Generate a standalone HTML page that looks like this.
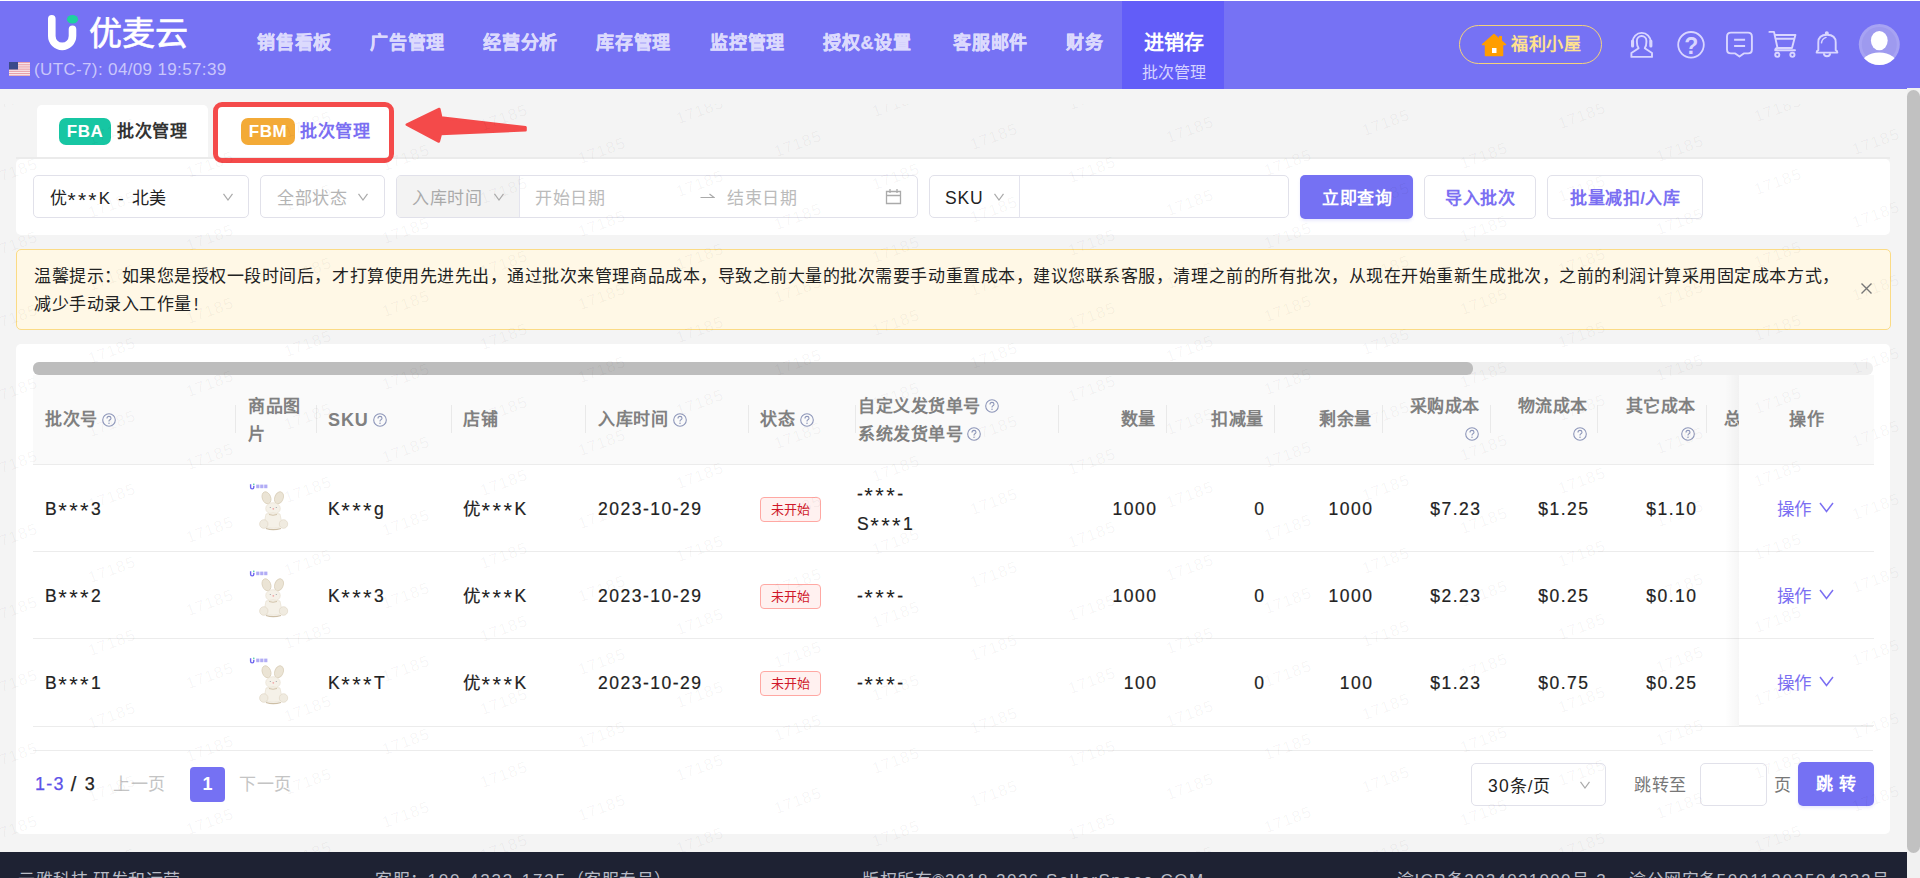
<!DOCTYPE html>
<html lang="zh-CN"><head><meta charset="utf-8">
<style>
*{box-sizing:border-box;margin:0;padding:0}
html,body{width:1920px;height:878px;overflow:hidden;background:#f4f4f4;font-family:"Liberation Sans",sans-serif;color:#222}
.a{position:absolute;white-space:nowrap}
#hdr{position:absolute;left:0;top:0;width:1920px;height:89px;background:#7672f4}
.nav{position:absolute;top:29.5px;font-size:18px;font-weight:bold;color:#dcdafd;line-height:26px;letter-spacing:0.75px;margin-left:1px;-webkit-text-stroke:0.35px #dcdafd}
.card{position:absolute;background:#fff;border-radius:5px}
.box{position:absolute;border:1px solid #e1e1ea;border-radius:5px;background:#fff}
.chev{position:absolute;width:10px;height:8px}
.th{position:absolute;font-size:17px;font-weight:bold;color:#808080;line-height:28px;letter-spacing:0.55px}
.td{position:absolute;font-size:17.5px;color:#222;line-height:28px;letter-spacing:1.5px;-webkit-text-stroke:0.2px #222}
.dv{position:absolute;top:405px;width:1px;height:28px;background:#e9e9e9}
.hl{position:absolute;height:1px;background:#ececec}
.q{position:absolute;width:14px;height:14px}
.tag{position:absolute;width:61px;height:25px;border:1px solid #ffa8a3;background:#fff1f0;border-radius:4px;color:#d0182a;font-size:13px;line-height:23px;text-align:center;letter-spacing:0.4px;text-indent:0.4px}
.op{position:absolute;font-size:17.5px;color:#7b6ff2;line-height:28px}
.as{font-size:22px;letter-spacing:2.4px;position:relative;top:3px;line-height:0;-webkit-text-stroke:0}
.wm{position:absolute;width:80px;height:24px;line-height:24px;text-align:center;font-size:16px;letter-spacing:1px;color:rgba(0,0,0,0.045);transform:rotate(-20deg)}
.img{position:absolute;width:40px;height:48px}
</style></head><body>
<div id="hdr">
<div class="a" style="left:0;top:0;width:1920px;height:1px;background:#fff"></div>
<svg class="a" style="left:40px;top:10px" width="45" height="45" viewBox="40 10 45 45">
<path d="M51.8,18.8 L51.8,36 A10.35,10.35 0 0 0 72.5,36 L72.5,29.3" fill="none" stroke="#fff" stroke-width="7.6" stroke-linecap="round"/>
<ellipse cx="72.5" cy="19.3" rx="5.6" ry="4.3" fill="#1ed1a0"/>
</svg>
<div class="a" id="logotxt" style="left:89px;top:12px;font-size:33px;line-height:44px;color:#fff;-webkit-text-stroke:0.7px #fff">优麦云</div>
<svg class="a" style="left:9px;top:62px" width="21" height="14" viewBox="0 0 21 14">
<rect width="21" height="14" fill="#e8a0aa"/>
<g fill="#f7e9ec"><rect y="1.1" width="21" height="1.1"/><rect y="3.3" width="21" height="1.1"/><rect y="5.5" width="21" height="1.1"/><rect y="7.7" width="21" height="1.1"/><rect y="9.9" width="21" height="1.1"/><rect y="12.1" width="21" height="1.1"/></g>
<rect width="9" height="7.5" fill="#3b4a8a"/>
</svg>
<div class="a" id="utc" style="left:34px;top:58px;font-size:17px;line-height:24px;color:#c9c6fb;letter-spacing:0.36px">(UTC-7): 04/09 19:57:39</div>
<div class="nav" style="left:256px">销售看板</div>
<div class="nav" style="left:369px">广告管理</div>
<div class="nav" style="left:482px">经营分析</div>
<div class="nav" style="left:595px">库存管理</div>
<div class="nav" style="left:709px">监控管理</div>
<div class="nav" style="left:822px">授权&amp;设置</div>
<div class="nav" style="left:952px">客服邮件</div>
<div class="nav" style="left:1065px">财务</div>
<div class="a" style="left:1122px;top:1px;width:102px;height:88px;background:#625df8"></div>
<div class="a" style="left:1144px;top:29px;font-size:20px;line-height:28px;font-weight:bold;color:#fff">进销存</div>
<div class="a" style="left:1142px;top:62px;font-size:16px;line-height:22px;color:#d5d2ff">批次管理</div>
<div class="a" style="left:1459px;top:25px;width:143px;height:39px;border:1px solid #f4d27b;border-radius:20px"></div>
<svg class="a" style="left:1480.5px;top:33px" width="26" height="24" viewBox="0 0 26 24">
<path d="M13,1.5 L1.5,11.5 L4.5,11.5 L4.5,22.5 L21.5,22.5 L21.5,11.5 L24.5,11.5 Z" fill="#ff9d00" stroke="#ff9d00" stroke-width="1.5" stroke-linejoin="round"/>
<rect x="18" y="3" width="3" height="6" fill="#ff9d00"/>
<rect x="11" y="15" width="4.5" height="5" fill="#fff"/>
</svg>
<div class="a" style="left:1511px;top:31px;font-size:17px;line-height:28px;font-weight:bold;color:#ffe28f;letter-spacing:0.6px">福利小屋</div>
<svg class="a" style="left:1625px;top:25px" width="280" height="45" viewBox="1625 25 280 45" fill="none" stroke="#d9d6ff" stroke-width="1.9" stroke-linejoin="round">
<path d="M1638.6,48.2 Q1636.9,46.3 1636.9,42 L1636.9,40.8 A4.75,4.75 0 0 1 1646.4,40.8 L1646.4,42 Q1646.4,46.3 1644.8,48.2 L1652,53 L1652,56.9 L1631.4,56.9 L1631.4,53 Z"/>
<path d="M1632.6,44.5 L1632.6,42 A9.1,9.1 0 0 1 1650.8,42 L1650.8,44.5"/>
<rect x="1631" y="39.6" width="3.1" height="8" rx="1.5" fill="#d9d6ff" stroke="none"/>
<rect x="1649.3" y="39.6" width="3.1" height="8" rx="1.5" fill="#d9d6ff" stroke="none"/>
<circle cx="1691" cy="44.8" r="12.8" stroke-width="1.8"/>
<text x="1691.2" y="53.5" font-family="Liberation Sans" font-size="23" font-weight="bold" text-anchor="middle" fill="#d9d6ff" stroke="none">?</text>
<path d="M1731,32.6 L1748,32.6 Q1751.9,32.6 1751.9,36.5 L1751.9,49.5 Q1751.9,53.4 1748,53.4 L1743.8,53.4 L1739.5,56.6 L1735.2,53.4 L1731,53.4 Q1727,53.4 1727,49.5 L1727,36.5 Q1727,32.6 1731,32.6 Z"/>
<path d="M1734.1,39.8 L1745.1,39.8 M1734.1,46 L1745.1,46"/>
<path d="M1769.4,31.9 L1774,31.9 L1777.5,48 L1792,48 L1795.4,35 L1774.7,35 M1775.4,38.8 L1794.5,38.8 M1777.5,48 Q1775.2,48.3 1775.2,50.3 L1795,50.3" stroke-linecap="round"/>
<circle cx="1777.3" cy="54.8" r="2.1"/><circle cx="1792.4" cy="54.8" r="2.1"/>
<path d="M1818.3,50.2 L1818.3,42.5 Q1818.3,34.8 1827,34.8 Q1835.7,34.8 1835.7,42.5 L1835.7,50.2 Q1837.4,51 1837.4,52.6 L1816.6,52.6 Q1816.6,51 1818.3,50.2 Z"/>
<circle cx="1826.8" cy="33.3" r="1.1" fill="#d9d6ff"/>
<path d="M1823.8,53.2 Q1824,56.2 1827,56.2 Q1830,56.2 1830.2,53.2"/>
<path d="M1821.5,42.8 Q1822,38.6 1826,37.4" stroke-width="1.5" stroke-linecap="round"/>
</svg>
<svg class="a" style="left:1858px;top:23px" width="43" height="43" viewBox="0 0 43 43">
<defs><clipPath id="cp"><circle cx="21.3" cy="21.5" r="20.5"/></clipPath></defs>
<circle cx="21.3" cy="21.5" r="20.5" fill="#a7a3f3"/>
<circle cx="21.3" cy="21.5" r="17.5" fill="#9e9aef"/>
<g clip-path="url(#cp)" fill="#fff"><ellipse cx="21.3" cy="17.6" rx="8.4" ry="9.6"/><ellipse cx="21.3" cy="43" rx="19" ry="13.5"/></g>
</svg>
</div>

<!-- tabs -->
<div class="card" style="left:37px;top:105px;width:171px;height:53px;border-radius:5px 5px 0 0"></div>
<div class="a" style="left:59px;top:118px;width:52px;height:27px;background:#17c6a3;border-radius:7px;color:#fff;font-weight:bold;font-size:17px;line-height:27px;text-align:center;letter-spacing:0.5px">FBA</div>
<div class="a" style="left:117px;top:118px;font-size:17px;line-height:28px;font-weight:bold;color:#333;letter-spacing:0.55px">批次管理</div>
<div class="card" style="left:213px;top:105px;width:180px;height:53px;border-radius:5px 5px 0 0"></div>
<div class="a" style="left:241px;top:118px;width:54px;height:27px;background:#f3aa37;border-radius:7px;color:#fff;font-weight:bold;font-size:17px;line-height:27px;text-align:center;letter-spacing:0.5px">FBM</div>
<div class="a" style="left:300px;top:118px;font-size:17px;line-height:28px;font-weight:bold;color:#7b6ff2;letter-spacing:0.55px">批次管理</div>
<!-- filter card -->
<div class="a" style="left:16px;top:157px;width:1874px;height:1.6px;background:#ebebeb"></div>
<div class="card" style="left:16px;top:158.6px;width:1874px;height:76.4px;border-radius:5px"></div>
<div class="box" style="left:33px;top:175px;width:216px;height:43px"></div>
<div class="a" style="left:50px;top:184.5px;font-size:17px;line-height:28px;color:#222;letter-spacing:0.55px">优<span class="as" style="font-size:21px;letter-spacing:2.2px;top:3px">***</span><span style="letter-spacing:1.6px">K - </span>北美</div>
<svg class="chev" style="left:223px;top:193px" viewBox="0 0 10 8"><path d="M0.5,0.8 L5,7 L9.5,0.8" fill="none" stroke="#aaa" stroke-width="1.2"/></svg>
<div class="box" style="left:260px;top:175px;width:125px;height:43px"></div>
<div class="a" style="left:277px;top:184.5px;font-size:17px;line-height:28px;color:#b5b5b5;letter-spacing:0.55px">全部状态</div>
<svg class="chev" style="left:358px;top:193px" viewBox="0 0 10 8"><path d="M0.5,0.8 L5,7 L9.5,0.8" fill="none" stroke="#aaa" stroke-width="1.2"/></svg>
<div class="box" style="left:396px;top:175px;width:522px;height:43px"></div>
<div class="a" style="left:397px;top:176px;width:123px;height:41px;background:#f3f3f3;border-right:1px solid #e4e4ee;border-radius:4px 0 0 4px"></div>
<div class="a" style="left:412px;top:184.5px;font-size:17px;line-height:28px;color:#aaa;letter-spacing:0.55px">入库时间</div>
<svg class="chev" style="left:494px;top:193px" viewBox="0 0 10 8"><path d="M0.5,0.8 L5,7 L9.5,0.8" fill="none" stroke="#aaa" stroke-width="1.2"/></svg>
<div class="a" style="left:535px;top:184.5px;font-size:17px;line-height:28px;color:#bbb;letter-spacing:0.55px">开始日期</div>
<svg class="a" style="left:700px;top:192px" width="15" height="8" viewBox="0 0 15 8"><path d="M0.5,5.5 L14,5.5 L9.5,2" fill="none" stroke="#aaa" stroke-width="1.2"/></svg>
<div class="a" style="left:727px;top:184.5px;font-size:17px;line-height:28px;color:#bbb;letter-spacing:0.55px">结束日期</div>
<svg class="a" style="left:885px;top:188px" width="17" height="17" viewBox="0 0 17 17"><path d="M1.5,3.5 L15.5,3.5 L15.5,15.5 L1.5,15.5 Z M1.5,7.5 L15.5,7.5 M5,1 L5,5 M12,1 L12,5" fill="none" stroke="#aaa" stroke-width="1.3"/></svg>
<div class="box" style="left:929px;top:175px;width:360px;height:43px"></div>
<div class="a" style="left:1019px;top:176px;width:1px;height:42px;background:#e4e4ee"></div>
<div class="a" style="left:945px;top:183.5px;font-size:17.5px;line-height:28px;color:#222;letter-spacing:0.8px">SKU</div>
<svg class="chev" style="left:994px;top:193px" viewBox="0 0 10 8"><path d="M0.5,0.8 L5,7 L9.5,0.8" fill="none" stroke="#aaa" stroke-width="1.2"/></svg>
<div class="a" style="left:1300px;top:175px;width:113px;height:44px;background:#7571f3;border-radius:5px;box-shadow:0 2px 3px rgba(117,113,243,0.15)"></div>
<div class="a" style="left:1322px;top:184.5px;font-size:17px;line-height:28px;color:#fff;font-weight:bold;letter-spacing:0.55px">立即查询</div>
<div class="box" style="left:1424px;top:175px;width:112px;height:44px"></div>
<div class="a" style="left:1445px;top:184.5px;font-size:17px;line-height:28px;color:#7b6ff2;font-weight:bold;letter-spacing:0.55px">导入批次</div>
<div class="box" style="left:1547px;top:175px;width:156px;height:44px"></div>
<div class="a" style="left:1570px;top:184.5px;font-size:17px;line-height:28px;color:#7b6ff2;font-weight:bold;letter-spacing:0.55px">批量减扣/入库</div>

<div class="a" style="left:213px;top:102px;width:181px;height:61px;border:5.6px solid #f44a4a;border-radius:9px"></div>
<svg class="a" style="left:400px;top:100px" width="135" height="50" viewBox="400 100 135 50">
<path d="M406.8,124.6 L439.3,109 L441.2,117.6 L525.5,127.3 L525.5,130.3 L440.8,134 L438.8,141.5 Z" fill="#f44a4a" stroke="#f44a4a" stroke-width="2.6" stroke-linejoin="round"/>
</svg>

<!-- notice -->
<div class="a" style="left:16px;top:249px;width:1875px;height:81px;background:#fff8e6;border:1px solid #fbdb85;border-radius:5px"></div>
<div class="a" style="left:34px;top:263px;font-size:17px;line-height:28px;color:#222;letter-spacing:0.53px">温馨提示：如果您是授权一段时间后，才打算使用先进先出，通过批次来管理商品成本，导致之前大量的批次需要手动重置成本，建议您联系客服，清理之前的所有批次，从现在开始重新生成批次，之前的利润计算采用固定成本方式，<br>减少手动录入工作量<span style="letter-spacing:0;margin-left:2px">!</span></div>
<svg class="a" style="left:1860px;top:282px" width="13" height="13" viewBox="0 0 13 13"><path d="M1.5,1.5 L11.5,11.5 M11.5,1.5 L1.5,11.5" fill="none" stroke="#777" stroke-width="1.4"/></svg>

<!-- table card -->
<div class="card" style="left:16px;top:344px;width:1874px;height:490px"></div>
<div class="a" style="left:33px;top:362px;width:1840px;height:12.5px;background:#efefef;border-radius:6px"></div>
<div class="a" style="left:33px;top:362px;width:1440px;height:12.5px;background:#bdbdbd;border-radius:6px"></div>
<div class="a" style="left:33px;top:374.5px;width:1840px;height:90px;background:#fafafa"></div>
<div class="hl" style="left:33px;top:464px;width:1840px"></div>
<div class="hl" style="left:33px;top:551px;width:1840px"></div>
<div class="hl" style="left:33px;top:638px;width:1840px"></div>
<div class="hl" style="left:33px;top:726px;width:1840px"></div>
<div class="hl" style="left:33px;top:750px;width:1840px"></div>
<div class="dv" style="left:235px"></div>
<div class="dv" style="left:316px"></div>
<div class="dv" style="left:451px"></div>
<div class="dv" style="left:585px"></div>
<div class="dv" style="left:748px"></div>
<div class="dv" style="left:855px"></div>
<div class="dv" style="left:1058px"></div>
<div class="dv" style="left:1166px"></div>
<div class="dv" style="left:1274px"></div>
<div class="dv" style="left:1382px"></div>
<div class="dv" style="left:1490px"></div>
<div class="dv" style="left:1597px"></div>
<div class="dv" style="left:1706px"></div>
<div class="th" style="left:45px;top:406px">批次号</div><svg class="q" style="left:102px;top:413px" viewBox="0 0 14 14"><circle cx="7" cy="7" r="6.3" fill="none" stroke="#8d96b9" stroke-width="1.1"/><path d="M5,5.4 Q5,3.4 7,3.4 Q9,3.4 9,5.2 Q9,6.3 7.6,6.9 Q7,7.2 7,8.4" fill="none" stroke="#8d96b9" stroke-width="1.1"/><circle cx="7" cy="10.3" r="0.75" fill="#8d96b9"/></svg>
<div class="th" style="left:248px;top:393px;line-height:28px">商品图<br>片</div>
<div class="th" style="left:328px;top:405.5px;letter-spacing:0.9px;font-size:18px">SKU</div><svg class="q" style="left:373px;top:413px" viewBox="0 0 14 14"><circle cx="7" cy="7" r="6.3" fill="none" stroke="#8d96b9" stroke-width="1.1"/><path d="M5,5.4 Q5,3.4 7,3.4 Q9,3.4 9,5.2 Q9,6.3 7.6,6.9 Q7,7.2 7,8.4" fill="none" stroke="#8d96b9" stroke-width="1.1"/><circle cx="7" cy="10.3" r="0.75" fill="#8d96b9"/></svg>
<div class="th" style="left:463px;top:406px">店铺</div>
<div class="th" style="left:598px;top:406px">入库时间</div><svg class="q" style="left:673px;top:413px" viewBox="0 0 14 14"><circle cx="7" cy="7" r="6.3" fill="none" stroke="#8d96b9" stroke-width="1.1"/><path d="M5,5.4 Q5,3.4 7,3.4 Q9,3.4 9,5.2 Q9,6.3 7.6,6.9 Q7,7.2 7,8.4" fill="none" stroke="#8d96b9" stroke-width="1.1"/><circle cx="7" cy="10.3" r="0.75" fill="#8d96b9"/></svg>
<div class="th" style="left:760px;top:406px">状态</div><svg class="q" style="left:800px;top:413px" viewBox="0 0 14 14"><circle cx="7" cy="7" r="6.3" fill="none" stroke="#8d96b9" stroke-width="1.1"/><path d="M5,5.4 Q5,3.4 7,3.4 Q9,3.4 9,5.2 Q9,6.3 7.6,6.9 Q7,7.2 7,8.4" fill="none" stroke="#8d96b9" stroke-width="1.1"/><circle cx="7" cy="10.3" r="0.75" fill="#8d96b9"/></svg>
<div class="th" style="left:858px;top:393px">自定义发货单号</div><svg class="q" style="left:985px;top:399px" viewBox="0 0 14 14"><circle cx="7" cy="7" r="6.3" fill="none" stroke="#8d96b9" stroke-width="1.1"/><path d="M5,5.4 Q5,3.4 7,3.4 Q9,3.4 9,5.2 Q9,6.3 7.6,6.9 Q7,7.2 7,8.4" fill="none" stroke="#8d96b9" stroke-width="1.1"/><circle cx="7" cy="10.3" r="0.75" fill="#8d96b9"/></svg>
<div class="th" style="left:858px;top:421px">系统发货单号</div><svg class="q" style="left:967px;top:427px" viewBox="0 0 14 14"><circle cx="7" cy="7" r="6.3" fill="none" stroke="#8d96b9" stroke-width="1.1"/><path d="M5,5.4 Q5,3.4 7,3.4 Q9,3.4 9,5.2 Q9,6.3 7.6,6.9 Q7,7.2 7,8.4" fill="none" stroke="#8d96b9" stroke-width="1.1"/><circle cx="7" cy="10.3" r="0.75" fill="#8d96b9"/></svg>
<div class="th" style="left:1058px;top:406px;width:98px;text-align:right">数量</div>
<div class="th" style="left:1166px;top:406px;width:98px;text-align:right">扣减量</div>
<div class="th" style="left:1274px;top:406px;width:98px;text-align:right">剩余量</div>
<div class="th" style="left:1382px;top:393px;width:98px;text-align:right">采购成本</div><svg class="q" style="left:1465px;top:427px" viewBox="0 0 14 14"><circle cx="7" cy="7" r="6.3" fill="none" stroke="#8d96b9" stroke-width="1.1"/><path d="M5,5.4 Q5,3.4 7,3.4 Q9,3.4 9,5.2 Q9,6.3 7.6,6.9 Q7,7.2 7,8.4" fill="none" stroke="#8d96b9" stroke-width="1.1"/><circle cx="7" cy="10.3" r="0.75" fill="#8d96b9"/></svg>
<div class="th" style="left:1490px;top:393px;width:98px;text-align:right">物流成本</div><svg class="q" style="left:1573px;top:427px" viewBox="0 0 14 14"><circle cx="7" cy="7" r="6.3" fill="none" stroke="#8d96b9" stroke-width="1.1"/><path d="M5,5.4 Q5,3.4 7,3.4 Q9,3.4 9,5.2 Q9,6.3 7.6,6.9 Q7,7.2 7,8.4" fill="none" stroke="#8d96b9" stroke-width="1.1"/><circle cx="7" cy="10.3" r="0.75" fill="#8d96b9"/></svg>
<div class="th" style="left:1597px;top:393px;width:99px;text-align:right">其它成本</div><svg class="q" style="left:1681px;top:427px" viewBox="0 0 14 14"><circle cx="7" cy="7" r="6.3" fill="none" stroke="#8d96b9" stroke-width="1.1"/><path d="M5,5.4 Q5,3.4 7,3.4 Q9,3.4 9,5.2 Q9,6.3 7.6,6.9 Q7,7.2 7,8.4" fill="none" stroke="#8d96b9" stroke-width="1.1"/><circle cx="7" cy="10.3" r="0.75" fill="#8d96b9"/></svg>
<div class="th" style="left:1724px;top:406px">总</div>
<div class="td" style="left:45px;top:495px">B<span class="as">***</span>3</div>
<svg class="a" style="left:244px;top:478px" width="50" height="56" viewBox="0 0 50 56">
<path d="M6.6,6.2 L6.6,9.3 Q6.6,10.9 8.2,10.9 Q9.8,10.9 9.8,9.3 L9.8,7.8" fill="none" stroke="#6e66ee" stroke-width="1.4"/>
<circle cx="9.8" cy="6.2" r="0.8" fill="#3cc9a0"/>
<g fill="#b1acf5"><rect x="12.2" y="6.6" width="3.2" height="3.6"/><rect x="16.2" y="6.6" width="3.2" height="3.6"/><rect x="20.2" y="6.6" width="3.2" height="3.6"/></g>
<ellipse cx="22.5" cy="19.8" rx="4.2" ry="6.2" fill="#ebe4d5" stroke="#ddd3bf" stroke-width="0.9" transform="rotate(-20 22.5 19.8)"/>
<ellipse cx="35" cy="19.8" rx="4.2" ry="6.2" fill="#ebe4d5" stroke="#ddd3bf" stroke-width="0.9" transform="rotate(22 35 19.8)"/>
<ellipse cx="29" cy="30.5" rx="7.3" ry="5.8" fill="#f5f1e8" stroke="#e6ddcc" stroke-width="0.6"/>
<path d="M22,36 Q29,33.5 36,36 L38.5,48.5 Q29,52 19.5,48.5 Z" fill="#f5f1e8" stroke="#e6ddcc" stroke-width="0.6"/>
<ellipse cx="19.8" cy="46" rx="4.2" ry="4.3" fill="#f0ebe0" stroke="#ded4c1" stroke-width="0.6"/>
<ellipse cx="39.5" cy="46" rx="4.2" ry="4.3" fill="#f0ebe0" stroke="#ded4c1" stroke-width="0.6"/>
<path d="M22,50.5 Q29,52.8 37,50.5" fill="none" stroke="#cdbfa6" stroke-width="1.2"/>
<circle cx="29.3" cy="30.8" r="0.9" fill="#f0a8a8"/>
<circle cx="26.3" cy="29.5" r="0.6" fill="#9aa0a8"/><circle cx="32.3" cy="29.5" r="0.6" fill="#9aa0a8"/>
<path d="M25,36.5 Q29,38 33,36.5" fill="none" stroke="#c9b79a" stroke-width="0.8"/>
</svg>
<div class="td" style="left:328px;top:495px">K<span class="as">***</span>g</div>
<div class="td" style="left:463px;top:495px">优<span class="as">***</span>K</div>
<div class="td" style="left:598px;top:495px">2023-10-29</div>
<div class="tag" style="left:760px;top:497px">未开始</div>
<div class="td" style="left:857px;top:479px;line-height:30px">-<span class="as">***</span>-<br>S<span class="as">***</span>1</div>
<div class="td" style="left:1058px;top:495px;width:99.5px;text-align:right">1000</div>
<div class="td" style="left:1166px;top:495px;width:99.5px;text-align:right">0</div>
<div class="td" style="left:1274px;top:495px;width:99.5px;text-align:right">1000</div>
<div class="td" style="left:1382px;top:495px;width:99.5px;text-align:right">$7.23</div>
<div class="td" style="left:1490px;top:495px;width:99.5px;text-align:right">$1.25</div>
<div class="td" style="left:1597px;top:495px;width:100.5px;text-align:right">$1.10</div>
<div class="td" style="left:45px;top:582px">B<span class="as">***</span>2</div>
<svg class="a" style="left:244px;top:565px" width="50" height="56" viewBox="0 0 50 56">
<path d="M6.6,6.2 L6.6,9.3 Q6.6,10.9 8.2,10.9 Q9.8,10.9 9.8,9.3 L9.8,7.8" fill="none" stroke="#6e66ee" stroke-width="1.4"/>
<circle cx="9.8" cy="6.2" r="0.8" fill="#3cc9a0"/>
<g fill="#b1acf5"><rect x="12.2" y="6.6" width="3.2" height="3.6"/><rect x="16.2" y="6.6" width="3.2" height="3.6"/><rect x="20.2" y="6.6" width="3.2" height="3.6"/></g>
<ellipse cx="22.5" cy="19.8" rx="4.2" ry="6.2" fill="#ebe4d5" stroke="#ddd3bf" stroke-width="0.9" transform="rotate(-20 22.5 19.8)"/>
<ellipse cx="35" cy="19.8" rx="4.2" ry="6.2" fill="#ebe4d5" stroke="#ddd3bf" stroke-width="0.9" transform="rotate(22 35 19.8)"/>
<ellipse cx="29" cy="30.5" rx="7.3" ry="5.8" fill="#f5f1e8" stroke="#e6ddcc" stroke-width="0.6"/>
<path d="M22,36 Q29,33.5 36,36 L38.5,48.5 Q29,52 19.5,48.5 Z" fill="#f5f1e8" stroke="#e6ddcc" stroke-width="0.6"/>
<ellipse cx="19.8" cy="46" rx="4.2" ry="4.3" fill="#f0ebe0" stroke="#ded4c1" stroke-width="0.6"/>
<ellipse cx="39.5" cy="46" rx="4.2" ry="4.3" fill="#f0ebe0" stroke="#ded4c1" stroke-width="0.6"/>
<path d="M22,50.5 Q29,52.8 37,50.5" fill="none" stroke="#cdbfa6" stroke-width="1.2"/>
<circle cx="29.3" cy="30.8" r="0.9" fill="#f0a8a8"/>
<circle cx="26.3" cy="29.5" r="0.6" fill="#9aa0a8"/><circle cx="32.3" cy="29.5" r="0.6" fill="#9aa0a8"/>
<path d="M25,36.5 Q29,38 33,36.5" fill="none" stroke="#c9b79a" stroke-width="0.8"/>
</svg>
<div class="td" style="left:328px;top:582px">K<span class="as">***</span>3</div>
<div class="td" style="left:463px;top:582px">优<span class="as">***</span>K</div>
<div class="td" style="left:598px;top:582px">2023-10-29</div>
<div class="tag" style="left:760px;top:584px">未开始</div>
<div class="td" style="left:857px;top:582px">-<span class="as">***</span>-</div>
<div class="td" style="left:1058px;top:582px;width:99.5px;text-align:right">1000</div>
<div class="td" style="left:1166px;top:582px;width:99.5px;text-align:right">0</div>
<div class="td" style="left:1274px;top:582px;width:99.5px;text-align:right">1000</div>
<div class="td" style="left:1382px;top:582px;width:99.5px;text-align:right">$2.23</div>
<div class="td" style="left:1490px;top:582px;width:99.5px;text-align:right">$0.25</div>
<div class="td" style="left:1597px;top:582px;width:100.5px;text-align:right">$0.10</div>
<div class="td" style="left:45px;top:669px">B<span class="as">***</span>1</div>
<svg class="a" style="left:244px;top:652px" width="50" height="56" viewBox="0 0 50 56">
<path d="M6.6,6.2 L6.6,9.3 Q6.6,10.9 8.2,10.9 Q9.8,10.9 9.8,9.3 L9.8,7.8" fill="none" stroke="#6e66ee" stroke-width="1.4"/>
<circle cx="9.8" cy="6.2" r="0.8" fill="#3cc9a0"/>
<g fill="#b1acf5"><rect x="12.2" y="6.6" width="3.2" height="3.6"/><rect x="16.2" y="6.6" width="3.2" height="3.6"/><rect x="20.2" y="6.6" width="3.2" height="3.6"/></g>
<ellipse cx="22.5" cy="19.8" rx="4.2" ry="6.2" fill="#ebe4d5" stroke="#ddd3bf" stroke-width="0.9" transform="rotate(-20 22.5 19.8)"/>
<ellipse cx="35" cy="19.8" rx="4.2" ry="6.2" fill="#ebe4d5" stroke="#ddd3bf" stroke-width="0.9" transform="rotate(22 35 19.8)"/>
<ellipse cx="29" cy="30.5" rx="7.3" ry="5.8" fill="#f5f1e8" stroke="#e6ddcc" stroke-width="0.6"/>
<path d="M22,36 Q29,33.5 36,36 L38.5,48.5 Q29,52 19.5,48.5 Z" fill="#f5f1e8" stroke="#e6ddcc" stroke-width="0.6"/>
<ellipse cx="19.8" cy="46" rx="4.2" ry="4.3" fill="#f0ebe0" stroke="#ded4c1" stroke-width="0.6"/>
<ellipse cx="39.5" cy="46" rx="4.2" ry="4.3" fill="#f0ebe0" stroke="#ded4c1" stroke-width="0.6"/>
<path d="M22,50.5 Q29,52.8 37,50.5" fill="none" stroke="#cdbfa6" stroke-width="1.2"/>
<circle cx="29.3" cy="30.8" r="0.9" fill="#f0a8a8"/>
<circle cx="26.3" cy="29.5" r="0.6" fill="#9aa0a8"/><circle cx="32.3" cy="29.5" r="0.6" fill="#9aa0a8"/>
<path d="M25,36.5 Q29,38 33,36.5" fill="none" stroke="#c9b79a" stroke-width="0.8"/>
</svg>
<div class="td" style="left:328px;top:669px">K<span class="as">***</span>T</div>
<div class="td" style="left:463px;top:669px">优<span class="as">***</span>K</div>
<div class="td" style="left:598px;top:669px">2023-10-29</div>
<div class="tag" style="left:760px;top:671px">未开始</div>
<div class="td" style="left:857px;top:669px">-<span class="as">***</span>-</div>
<div class="td" style="left:1058px;top:669px;width:99.5px;text-align:right">100</div>
<div class="td" style="left:1166px;top:669px;width:99.5px;text-align:right">0</div>
<div class="td" style="left:1274px;top:669px;width:99.5px;text-align:right">100</div>
<div class="td" style="left:1382px;top:669px;width:99.5px;text-align:right">$1.23</div>
<div class="td" style="left:1490px;top:669px;width:99.5px;text-align:right">$0.75</div>
<div class="td" style="left:1597px;top:669px;width:100.5px;text-align:right">$0.25</div>
<div class="a" style="left:1725px;top:374.5px;width:14px;height:351px;background:linear-gradient(to right,rgba(0,0,0,0),rgba(0,0,0,0.035))"></div>
<div class="a" style="left:1739px;top:374.5px;width:135px;height:90px;background:#fafafa;border-bottom:1px solid #ececec"></div>
<div class="a" style="left:1739px;top:465px;width:135px;height:87px;background:#fff;border-bottom:1px solid #ececec"></div>
<div class="a" style="left:1739px;top:552px;width:135px;height:87px;background:#fff;border-bottom:1px solid #ececec"></div>
<div class="a" style="left:1739px;top:639px;width:135px;height:87px;background:#fff;border-bottom:1px solid #ececec"></div>
<div class="th" style="left:1789px;top:406px">操作</div>
<div class="op" style="left:1777px;top:495px">操作</div><svg class="a" style="left:1819px;top:502px" width="16" height="11" viewBox="0 0 16 11"><path d="M1,1 L7.5,9.5 L14,1" fill="none" stroke="#7b6ff2" stroke-width="1.5"/></svg>
<div class="op" style="left:1777px;top:582px">操作</div><svg class="a" style="left:1819px;top:589px" width="16" height="11" viewBox="0 0 16 11"><path d="M1,1 L7.5,9.5 L14,1" fill="none" stroke="#7b6ff2" stroke-width="1.5"/></svg>
<div class="op" style="left:1777px;top:669px">操作</div><svg class="a" style="left:1819px;top:676px" width="16" height="11" viewBox="0 0 16 11"><path d="M1,1 L7.5,9.5 L14,1" fill="none" stroke="#7b6ff2" stroke-width="1.5"/></svg>

<div class="a" style="left:35px;top:770px;font-size:18px;line-height:28px;color:#222;letter-spacing:1.2px;-webkit-text-stroke:0.25px"><span style="color:#5d52e8">1-3</span> <span style="font-size:20px;position:relative;top:1px;line-height:0">/</span> <span style="margin-left:1px">3</span></div>
<div class="a" style="left:113px;top:771px;font-size:17px;line-height:28px;color:#c4c4c4;letter-spacing:0.55px">上一页</div>
<div class="a" style="left:190px;top:767px;width:35px;height:35px;background:#7571f3;border-radius:4px;color:#fff;font-weight:bold;font-size:18px;line-height:35px;text-align:center">1</div>
<div class="a" style="left:239px;top:771px;font-size:17px;line-height:28px;color:#c4c4c4;letter-spacing:0.55px">下一页</div>
<div class="box" style="left:1471px;top:763px;width:135px;height:43px"></div>
<div class="a" style="left:1488px;top:772px;font-size:17px;line-height:28px;color:#222;letter-spacing:0.55px"><span style="letter-spacing:1.3px;font-size:17.5px">30</span>条/页</div>
<svg class="chev" style="left:1580px;top:781px" viewBox="0 0 10 8"><path d="M0.5,0.8 L5,7 L9.5,0.8" fill="none" stroke="#aaa" stroke-width="1.2"/></svg>
<div class="a" style="left:1634px;top:772px;font-size:17px;line-height:28px;color:#777;letter-spacing:0.55px">跳转至</div>
<div class="box" style="left:1700px;top:763px;width:67px;height:43px"></div>
<div class="a" style="left:1774px;top:772px;font-size:17px;line-height:28px;color:#777">页</div>
<div class="a" style="left:1798px;top:762px;width:76px;height:44px;background:#7571f3;border-radius:5px;box-shadow:0 2px 3px rgba(117,113,243,0.15)"></div>
<div class="a" style="left:1816px;top:771px;font-size:17px;line-height:28px;color:#fff;font-weight:bold;letter-spacing:0.55px">跳 转</div>

<div class="a" style="left:0;top:104px;width:1907px;height:748px;overflow:hidden;pointer-events:none">
<div class="wm" style="left:-26px;top:-17px">17185</div><div class="wm" style="left:-26px;top:56px">17185</div><div class="wm" style="left:-26px;top:129px">17185</div><div class="wm" style="left:-26px;top:202px">17185</div><div class="wm" style="left:-26px;top:275px">17185</div><div class="wm" style="left:-26px;top:348px">17185</div><div class="wm" style="left:-26px;top:421px">17185</div><div class="wm" style="left:-26px;top:494px">17185</div><div class="wm" style="left:-26px;top:567px">17185</div><div class="wm" style="left:-26px;top:640px">17185</div><div class="wm" style="left:-26px;top:713px">17185</div><div class="wm" style="left:72px;top:16px">17185</div><div class="wm" style="left:72px;top:89px">17185</div><div class="wm" style="left:72px;top:162px">17185</div><div class="wm" style="left:72px;top:235px">17185</div><div class="wm" style="left:72px;top:308px">17185</div><div class="wm" style="left:72px;top:381px">17185</div><div class="wm" style="left:72px;top:454px">17185</div><div class="wm" style="left:72px;top:527px">17185</div><div class="wm" style="left:72px;top:600px">17185</div><div class="wm" style="left:72px;top:673px">17185</div><div class="wm" style="left:72px;top:746px">17185</div><div class="wm" style="left:170px;top:-24px">17185</div><div class="wm" style="left:170px;top:49px">17185</div><div class="wm" style="left:170px;top:122px">17185</div><div class="wm" style="left:170px;top:195px">17185</div><div class="wm" style="left:170px;top:268px">17185</div><div class="wm" style="left:170px;top:341px">17185</div><div class="wm" style="left:170px;top:414px">17185</div><div class="wm" style="left:170px;top:487px">17185</div><div class="wm" style="left:170px;top:560px">17185</div><div class="wm" style="left:170px;top:633px">17185</div><div class="wm" style="left:170px;top:706px">17185</div><div class="wm" style="left:268px;top:9px">17185</div><div class="wm" style="left:268px;top:82px">17185</div><div class="wm" style="left:268px;top:155px">17185</div><div class="wm" style="left:268px;top:228px">17185</div><div class="wm" style="left:268px;top:301px">17185</div><div class="wm" style="left:268px;top:374px">17185</div><div class="wm" style="left:268px;top:447px">17185</div><div class="wm" style="left:268px;top:520px">17185</div><div class="wm" style="left:268px;top:593px">17185</div><div class="wm" style="left:268px;top:666px">17185</div><div class="wm" style="left:268px;top:739px">17185</div><div class="wm" style="left:366px;top:-31px">17185</div><div class="wm" style="left:366px;top:42px">17185</div><div class="wm" style="left:366px;top:115px">17185</div><div class="wm" style="left:366px;top:188px">17185</div><div class="wm" style="left:366px;top:261px">17185</div><div class="wm" style="left:366px;top:334px">17185</div><div class="wm" style="left:366px;top:407px">17185</div><div class="wm" style="left:366px;top:480px">17185</div><div class="wm" style="left:366px;top:553px">17185</div><div class="wm" style="left:366px;top:626px">17185</div><div class="wm" style="left:366px;top:699px">17185</div><div class="wm" style="left:464px;top:2px">17185</div><div class="wm" style="left:464px;top:75px">17185</div><div class="wm" style="left:464px;top:148px">17185</div><div class="wm" style="left:464px;top:221px">17185</div><div class="wm" style="left:464px;top:294px">17185</div><div class="wm" style="left:464px;top:367px">17185</div><div class="wm" style="left:464px;top:440px">17185</div><div class="wm" style="left:464px;top:513px">17185</div><div class="wm" style="left:464px;top:586px">17185</div><div class="wm" style="left:464px;top:659px">17185</div><div class="wm" style="left:464px;top:732px">17185</div><div class="wm" style="left:562px;top:35px">17185</div><div class="wm" style="left:562px;top:108px">17185</div><div class="wm" style="left:562px;top:181px">17185</div><div class="wm" style="left:562px;top:254px">17185</div><div class="wm" style="left:562px;top:327px">17185</div><div class="wm" style="left:562px;top:400px">17185</div><div class="wm" style="left:562px;top:473px">17185</div><div class="wm" style="left:562px;top:546px">17185</div><div class="wm" style="left:562px;top:619px">17185</div><div class="wm" style="left:562px;top:692px">17185</div><div class="wm" style="left:660px;top:-5px">17185</div><div class="wm" style="left:660px;top:68px">17185</div><div class="wm" style="left:660px;top:141px">17185</div><div class="wm" style="left:660px;top:214px">17185</div><div class="wm" style="left:660px;top:287px">17185</div><div class="wm" style="left:660px;top:360px">17185</div><div class="wm" style="left:660px;top:433px">17185</div><div class="wm" style="left:660px;top:506px">17185</div><div class="wm" style="left:660px;top:579px">17185</div><div class="wm" style="left:660px;top:652px">17185</div><div class="wm" style="left:660px;top:725px">17185</div><div class="wm" style="left:758px;top:28px">17185</div><div class="wm" style="left:758px;top:101px">17185</div><div class="wm" style="left:758px;top:174px">17185</div><div class="wm" style="left:758px;top:247px">17185</div><div class="wm" style="left:758px;top:320px">17185</div><div class="wm" style="left:758px;top:393px">17185</div><div class="wm" style="left:758px;top:466px">17185</div><div class="wm" style="left:758px;top:539px">17185</div><div class="wm" style="left:758px;top:612px">17185</div><div class="wm" style="left:758px;top:685px">17185</div><div class="wm" style="left:758px;top:758px">17185</div><div class="wm" style="left:856px;top:-12px">17185</div><div class="wm" style="left:856px;top:61px">17185</div><div class="wm" style="left:856px;top:134px">17185</div><div class="wm" style="left:856px;top:207px">17185</div><div class="wm" style="left:856px;top:280px">17185</div><div class="wm" style="left:856px;top:353px">17185</div><div class="wm" style="left:856px;top:426px">17185</div><div class="wm" style="left:856px;top:499px">17185</div><div class="wm" style="left:856px;top:572px">17185</div><div class="wm" style="left:856px;top:645px">17185</div><div class="wm" style="left:856px;top:718px">17185</div><div class="wm" style="left:954px;top:21px">17185</div><div class="wm" style="left:954px;top:94px">17185</div><div class="wm" style="left:954px;top:167px">17185</div><div class="wm" style="left:954px;top:240px">17185</div><div class="wm" style="left:954px;top:313px">17185</div><div class="wm" style="left:954px;top:386px">17185</div><div class="wm" style="left:954px;top:459px">17185</div><div class="wm" style="left:954px;top:532px">17185</div><div class="wm" style="left:954px;top:605px">17185</div><div class="wm" style="left:954px;top:678px">17185</div><div class="wm" style="left:954px;top:751px">17185</div><div class="wm" style="left:1052px;top:-19px">17185</div><div class="wm" style="left:1052px;top:54px">17185</div><div class="wm" style="left:1052px;top:127px">17185</div><div class="wm" style="left:1052px;top:200px">17185</div><div class="wm" style="left:1052px;top:273px">17185</div><div class="wm" style="left:1052px;top:346px">17185</div><div class="wm" style="left:1052px;top:419px">17185</div><div class="wm" style="left:1052px;top:492px">17185</div><div class="wm" style="left:1052px;top:565px">17185</div><div class="wm" style="left:1052px;top:638px">17185</div><div class="wm" style="left:1052px;top:711px">17185</div><div class="wm" style="left:1150px;top:14px">17185</div><div class="wm" style="left:1150px;top:87px">17185</div><div class="wm" style="left:1150px;top:160px">17185</div><div class="wm" style="left:1150px;top:233px">17185</div><div class="wm" style="left:1150px;top:306px">17185</div><div class="wm" style="left:1150px;top:379px">17185</div><div class="wm" style="left:1150px;top:452px">17185</div><div class="wm" style="left:1150px;top:525px">17185</div><div class="wm" style="left:1150px;top:598px">17185</div><div class="wm" style="left:1150px;top:671px">17185</div><div class="wm" style="left:1150px;top:744px">17185</div><div class="wm" style="left:1248px;top:-26px">17185</div><div class="wm" style="left:1248px;top:47px">17185</div><div class="wm" style="left:1248px;top:120px">17185</div><div class="wm" style="left:1248px;top:193px">17185</div><div class="wm" style="left:1248px;top:266px">17185</div><div class="wm" style="left:1248px;top:339px">17185</div><div class="wm" style="left:1248px;top:412px">17185</div><div class="wm" style="left:1248px;top:485px">17185</div><div class="wm" style="left:1248px;top:558px">17185</div><div class="wm" style="left:1248px;top:631px">17185</div><div class="wm" style="left:1248px;top:704px">17185</div><div class="wm" style="left:1346px;top:7px">17185</div><div class="wm" style="left:1346px;top:80px">17185</div><div class="wm" style="left:1346px;top:153px">17185</div><div class="wm" style="left:1346px;top:226px">17185</div><div class="wm" style="left:1346px;top:299px">17185</div><div class="wm" style="left:1346px;top:372px">17185</div><div class="wm" style="left:1346px;top:445px">17185</div><div class="wm" style="left:1346px;top:518px">17185</div><div class="wm" style="left:1346px;top:591px">17185</div><div class="wm" style="left:1346px;top:664px">17185</div><div class="wm" style="left:1346px;top:737px">17185</div><div class="wm" style="left:1444px;top:-33px">17185</div><div class="wm" style="left:1444px;top:40px">17185</div><div class="wm" style="left:1444px;top:113px">17185</div><div class="wm" style="left:1444px;top:186px">17185</div><div class="wm" style="left:1444px;top:259px">17185</div><div class="wm" style="left:1444px;top:332px">17185</div><div class="wm" style="left:1444px;top:405px">17185</div><div class="wm" style="left:1444px;top:478px">17185</div><div class="wm" style="left:1444px;top:551px">17185</div><div class="wm" style="left:1444px;top:624px">17185</div><div class="wm" style="left:1444px;top:697px">17185</div><div class="wm" style="left:1542px;top:0px">17185</div><div class="wm" style="left:1542px;top:73px">17185</div><div class="wm" style="left:1542px;top:146px">17185</div><div class="wm" style="left:1542px;top:219px">17185</div><div class="wm" style="left:1542px;top:292px">17185</div><div class="wm" style="left:1542px;top:365px">17185</div><div class="wm" style="left:1542px;top:438px">17185</div><div class="wm" style="left:1542px;top:511px">17185</div><div class="wm" style="left:1542px;top:584px">17185</div><div class="wm" style="left:1542px;top:657px">17185</div><div class="wm" style="left:1542px;top:730px">17185</div><div class="wm" style="left:1640px;top:33px">17185</div><div class="wm" style="left:1640px;top:106px">17185</div><div class="wm" style="left:1640px;top:179px">17185</div><div class="wm" style="left:1640px;top:252px">17185</div><div class="wm" style="left:1640px;top:325px">17185</div><div class="wm" style="left:1640px;top:398px">17185</div><div class="wm" style="left:1640px;top:471px">17185</div><div class="wm" style="left:1640px;top:544px">17185</div><div class="wm" style="left:1640px;top:617px">17185</div><div class="wm" style="left:1640px;top:690px">17185</div><div class="wm" style="left:1640px;top:763px">17185</div><div class="wm" style="left:1738px;top:-7px">17185</div><div class="wm" style="left:1738px;top:66px">17185</div><div class="wm" style="left:1738px;top:139px">17185</div><div class="wm" style="left:1738px;top:212px">17185</div><div class="wm" style="left:1738px;top:285px">17185</div><div class="wm" style="left:1738px;top:358px">17185</div><div class="wm" style="left:1738px;top:431px">17185</div><div class="wm" style="left:1738px;top:504px">17185</div><div class="wm" style="left:1738px;top:577px">17185</div><div class="wm" style="left:1738px;top:650px">17185</div><div class="wm" style="left:1738px;top:723px">17185</div><div class="wm" style="left:1836px;top:26px">17185</div><div class="wm" style="left:1836px;top:99px">17185</div><div class="wm" style="left:1836px;top:172px">17185</div><div class="wm" style="left:1836px;top:245px">17185</div><div class="wm" style="left:1836px;top:318px">17185</div><div class="wm" style="left:1836px;top:391px">17185</div><div class="wm" style="left:1836px;top:464px">17185</div><div class="wm" style="left:1836px;top:537px">17185</div><div class="wm" style="left:1836px;top:610px">17185</div><div class="wm" style="left:1836px;top:683px">17185</div><div class="wm" style="left:1836px;top:756px">17185</div>
</div>
<!-- footer -->
<div class="a" style="left:0;top:852px;width:1907px;height:26px;background:#1e2233"></div>
<div class="a" style="left:18px;top:869px;font-size:17px;line-height:24px;color:#b9bcc6;letter-spacing:0.5px">云雅科技 研发和运营</div>
<div class="a" style="left:375px;top:869px;font-size:17px;line-height:24px;color:#b9bcc6;letter-spacing:0.5px">客服：<span style="letter-spacing:1.85px">100-4233-1735</span>（客服专号）</div>
<div class="a" style="left:862px;top:869px;font-size:17px;line-height:24px;color:#b9bcc6;letter-spacing:0.5px">版权所有©<span style="letter-spacing:1.5px">2018-2026 SellerSpace.COM</span></div>
<div class="a" style="left:1397px;top:869px;font-size:17px;line-height:24px;color:#b9bcc6;letter-spacing:0.5px">渝<span style="letter-spacing:1.3px">ICP</span>备<span style="letter-spacing:1.3px">2024021000</span>号<span style="letter-spacing:1.3px">-3</span><span style="display:inline-block;width:22px"></span>渝公网安备<span style="letter-spacing:1.75px">50011202504332</span>号</div>

<!-- page scrollbar -->
<div class="a" style="left:1907px;top:88px;width:13px;height:790px;background:#f1f1f1"></div>
<div class="a" style="left:1907px;top:90px;width:13px;height:763px;background:#c1c1c1;border-radius:6.5px"></div>
</body></html>
